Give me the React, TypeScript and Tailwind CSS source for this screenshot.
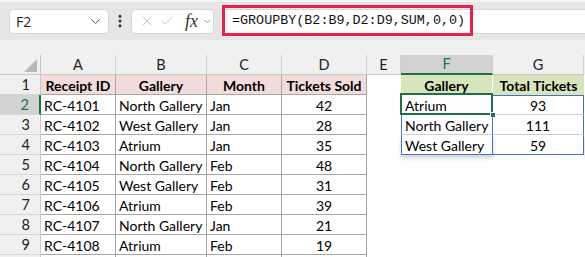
import { ChevronDown, EllipsisVertical, X, Check } from "lucide-react";

const cols = ["A", "B", "C", "D", "E", "F", "G"];

const rows = [
  ["RC-4101", "North Gallery", "Jan", "42"],
  ["RC-4102", "West Gallery", "Jan", "28"],
  ["RC-4103", "Atrium", "Jan", "35"],
  ["RC-4104", "North Gallery", "Feb", "48"],
  ["RC-4105", "West Gallery", "Feb", "31"],
  ["RC-4106", "Atrium", "Feb", "39"],
  ["RC-4107", "North Gallery", "Jan", "21"],
  ["RC-4108", "Atrium", "Feb", "19"],
];

const spill = [
  ["Atrium", "93"],
  ["North Gallery", "111"],
  ["West Gallery", "59"],
];

const grid = "grid grid-cols-[41px_75px_91px_75px_85px_34px_92px_91px_1px]";

function RowHead({ n, active }: { n: number | string; active?: boolean }) {
  return (
    <div
      className={`h-[20px] flex items-center justify-end pr-[10px] text-[14.5px] border-b border-[#d6d6d6] ${
        active
          ? "bg-[#d2d2d2] text-[#1e7145] border-r-2 border-r-[#1e7145]"
          : "bg-[#f0f0f0] text-[#222] border-r border-r-[#c8c8c8]"
      }`}
    >
      {n}
    </div>
  );
}

function Cell({ v, bold, center, fill }: { v: string; bold?: boolean; center?: boolean; fill?: string }) {
  return (
    <div
      className={`h-[20px] flex items-center pt-[1px] px-[3px] text-[14px] text-black border-r border-b border-[#a6a6a6] whitespace-nowrap overflow-hidden ${
        bold ? "font-bold" : ""
      } ${center ? "justify-center" : ""} ${fill ?? "bg-white"}`}
    >
      {v}
    </div>
  );
}

export default function App() {
  return (
    <div className="w-[585px] h-[257px] overflow-hidden bg-white font-['Lato','Open_Sans',sans-serif]">
      {/* formula bar */}
      <div className="h-[40px] bg-[#e6e6e6] border-t-2 border-[#f4f4f4] flex items-center pl-[9px] gap-0">
        <div className="w-[100px] h-[25px] bg-white rounded-[4px] border border-[#d8d8d8] flex items-center justify-between pl-[6px] pr-[5px]">
          <span className="text-[14px] text-[#222] font-['Open_Sans',sans-serif]">F2</span>
          <ChevronDown size={15} strokeWidth={1.6} className="text-[#444]" />
        </div>
        <div className="w-[22px] flex justify-center">
          <EllipsisVertical size={16} strokeWidth={2.6} className="text-[#333]" />
        </div>
        <div className="w-[83px] h-[25px] bg-white rounded-[4px] border border-[#d8d8d8] flex items-center pl-[7px] gap-[4px]">
          <X size={16} strokeWidth={1.2} className="text-[#b8b8b8]" />
          <Check size={16} strokeWidth={1.2} className="text-[#b8b8b8]" />
          <span className="ml-[6px] italic text-[18px] font-['Liberation_Serif',serif] text-[#333] leading-none">fx</span>
          <ChevronDown size={11} strokeWidth={1.6} className="text-[#777]" />
        </div>
        <div className="relative ml-[8px] flex-1 h-[25px] bg-white border-y border-[#d8d8d8]">
          <div className="absolute left-0 top-[-5px] w-[251px] h-[31px] border-[3px] border-[#e8204a]"></div>
          <div className="h-full flex items-center pl-[10px] text-[13.4px] text-[#111] font-['Liberation_Mono',monospace]">
            =GROUPBY(B2:B9,D2:D9,SUM,0,0)
          </div>
        </div>
      </div>
      <div className="h-[15px] bg-[#f0f0f0]"></div>

      {/* column header row */}
      <div className={grid}>
        <div className="relative h-[20px] bg-[#f0f0f0] border-r border-b border-[#c8c8c8]">
          <div className="absolute right-[3px] bottom-[2px] w-0 h-0 border-l-[13px] border-l-transparent border-b-[13px] border-b-[#b8b8b8]"></div>
        </div>
        {cols.map((c) => (
          <div
            key={c}
            className={`h-[20px] flex items-center justify-center text-[14.5px] border-r border-[#d0d0d0] ${
              c === "F"
                ? "bg-[#d2d2d2] text-[#1e7145] border-b-2 border-b-[#1e7145]"
                : "bg-[#f0f0f0] text-[#222] border-b border-b-[#c8c8c8]"
            }`}
          >
            {c}
          </div>
        ))}
        <div className="bg-[#f0f0f0]"></div>
      </div>

      {/* row 1 */}
      <div className={grid}>
        <RowHead n={1} />
        <Cell v="Receipt ID" bold center fill="bg-[#f2dcdb]" />
        <Cell v="Gallery" bold center fill="bg-[#f2dcdb]" />
        <Cell v="Month" bold center fill="bg-[#f2dcdb]" />
        <Cell v="Tickets Sold" bold center fill="bg-[#f2dcdb]" />
        <div className="h-[20px] bg-white"></div>
        <div className="h-[20px] flex items-center pt-[1px] justify-center text-[14px] font-bold bg-[#d8e4bc] border-r border-white">Gallery</div>
        <div className="h-[20px] flex items-center pt-[1px] justify-center text-[14px] font-bold bg-[#d8e4bc] whitespace-nowrap">Total Tickets</div>
        <div></div>
      </div>

      {/* data rows */}
      {rows.map((r, i) => {
        const s = spill[i];
        return (
          <div key={i} className={grid}>
            <RowHead n={i + 2} active={i === 0} />
            <Cell v={r[0]} />
            <Cell v={r[1]} />
            <Cell v={r[2]} />
            <Cell v={r[3]} center />
            <div className="h-[20px] bg-white"></div>
            {s ? (
              <>
                <div
                  className={`relative h-[20px] flex items-center pt-[1px] px-[3px] text-[14px] whitespace-nowrap border-l border-r border-[#4472c4] ${
                    i === 2 ? "border-b border-b-[#4472c4] shadow-[0_3px_4px_rgba(0,0,0,0.18)]" : "border-b border-b-[#d0d0d0]"
                  }`}
                >
                  {s[0]}
                  {i === 0 && (
                    <>
                      <div className="absolute left-[-2px] top-[-2px] w-[93px] h-[22px] border-2 border-[#1e7145]"></div>
                      <div className="absolute right-[-4px] bottom-[-4px] w-[6px] h-[6px] bg-[#1e7145] border border-white"></div>
                    </>
                  )}
                </div>
                <div
                  className={`h-[20px] flex items-center pt-[1px] justify-center text-[14px] border-r border-[#4472c4] ${
                    i === 2 ? "border-b border-b-[#4472c4] shadow-[0_3px_4px_rgba(0,0,0,0.18)]" : "border-b border-b-[#d0d0d0]"
                  } ${i === 0 ? "border-t border-t-[#4472c4]" : ""}`}
                >
                  {s[1]}
                </div>
              </>
            ) : (
              <>
                <div className="h-[20px] bg-white"></div>
                <div className="h-[20px] bg-white"></div>
              </>
            )}
            <div></div>
          </div>
        );
      })}
      <div className={grid}>
        <RowHead n="" />
        <div className="h-[20px] border-r border-[#a6a6a6]"></div>
        <div className="h-[20px] border-r border-[#a6a6a6]"></div>
        <div className="h-[20px] border-r border-[#a6a6a6]"></div>
        <div className="h-[20px] border-r border-[#a6a6a6]"></div>
      </div>
    </div>
  );
}
